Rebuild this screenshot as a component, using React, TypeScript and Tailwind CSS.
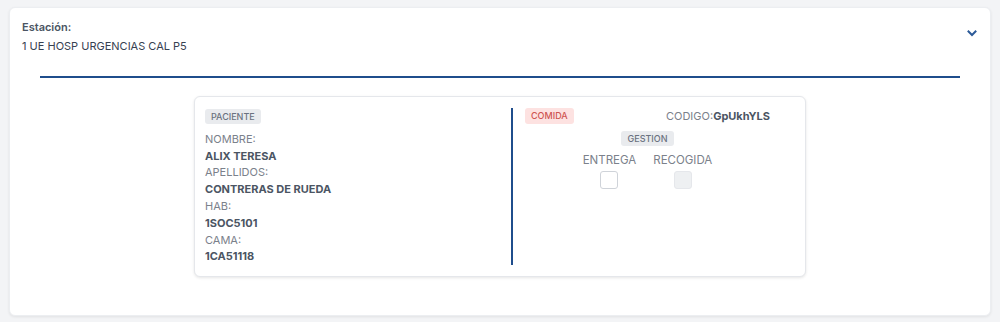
export default function App() {
  return (
    <div
      className="min-h-screen bg-[#f3f4f6] px-[9px] pt-[7px] pb-[6px]"
      style={{ fontFamily: "Inter, 'Noto Sans', sans-serif" }}
    >
      <div className="h-[309px] rounded-md border border-[#eceef1] bg-white shadow-[0_1px_3px_rgba(0,0,0,0.08)]">
        <div className="flex items-start justify-between pl-[12px] pr-[12px] pt-[10px]">
          <div>
            <div className="text-[11px] font-semibold leading-[19px] text-[#4b5563]">Estación:</div>
            <div className="text-[11px] leading-[19px] text-[#374151]">1 UE HOSP URGENCIAS CAL P5</div>
          </div>
          <svg width="12" height="12" viewBox="0 0 12 12" className="mt-[9px]">
            <path d="M1.8 3.8 L6 8 L10.2 3.8" fill="none" stroke="#2c5a98" strokeWidth="2" />
          </svg>
        </div>

        <div className="mx-[30px] mt-[20px] h-[2px] bg-[#1f4d8c]" />

        <div className="mx-auto mt-[18px] flex h-[181px] w-[612px] rounded-md border border-[#e5e7eb] bg-white py-[11px] pl-[10px] pr-[23px] shadow-[0_1px_3px_rgba(0,0,0,0.1)]">
          <div className="flex-1 text-[11px] leading-[16.8px] text-[#7b818b]">
            <span className="inline-block rounded-[3px] bg-[#e9ebee] px-[6px] py-[2px] text-[9px] font-medium leading-[11px] text-[#6b7280]">
              PACIENTE
            </span>
            <div className="mt-[6px]">NOMBRE:</div>
            <div className="font-bold text-[#4b5563]">ALIX TERESA</div>
            <div>APELLIDOS:</div>
            <div className="font-bold text-[#4b5563]">CONTRERAS DE RUEDA</div>
            <div>HAB:</div>
            <div className="font-bold text-[#4b5563]">1SOC5101</div>
            <div>CAMA:</div>
            <div className="font-bold text-[#4b5563]">1CA51118</div>
          </div>

          <div className="w-[2px] bg-[#1f4d8c]" />

          <div className="w-[269px] px-3 text-[#7b818b]">
            <div className="flex items-center justify-between">
              <span className="inline-block rounded-[3px] bg-[#fde2e1] px-[6px] py-[2px] text-[9px] font-medium leading-[12px] text-[#cf5552]">
                COMIDA
              </span>
              <span className="text-[11px]">
                CODIGO:<span className="font-bold text-[#4b5563]">GpUkhYLS</span>
              </span>
            </div>
            <div className="mt-[6px] flex justify-center">
              <span className="inline-block rounded-[3px] bg-[#e9ebee] px-[6px] py-[2px] text-[9px] font-medium leading-[11px] text-[#6b7280]">
                GESTION
              </span>
            </div>
            <div className="mt-[6px] flex justify-center gap-x-[17px] text-[11.5px] leading-[16px]">
              <div className="flex flex-col items-center">
                <span>ENTREGA</span>
                <span className="mt-[3px] h-[18px] w-[18px] rounded-[3px] border border-[#cfd3d9] bg-white" />
              </div>
              <div className="flex flex-col items-center">
                <span>RECOGIDA</span>
                <span className="mt-[3px] h-[18px] w-[18px] rounded-[3px] border border-[#e5e7eb] bg-[#eef0f2]" />
              </div>
            </div>
          </div>
        </div>
      </div>
    </div>
  );
}
